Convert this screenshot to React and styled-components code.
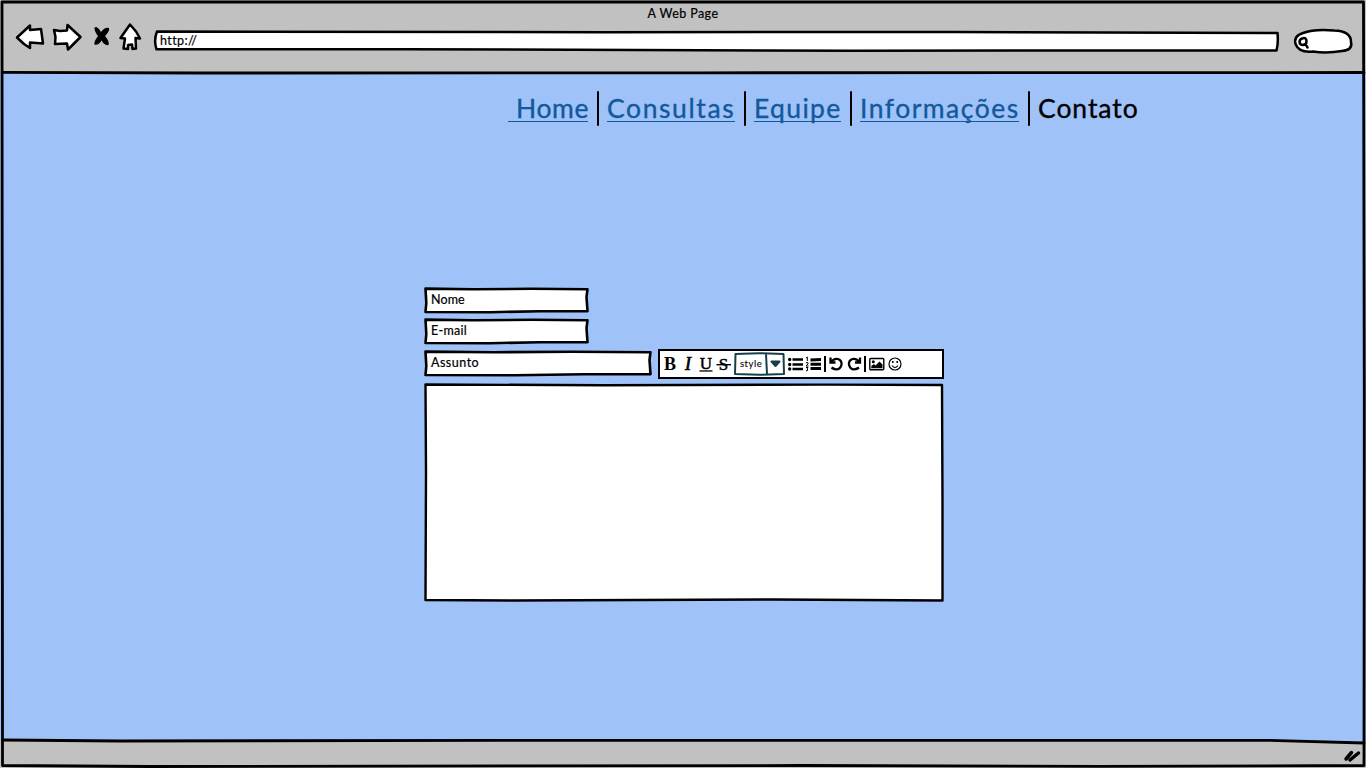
import React from "react";
import styled, { createGlobalStyle } from "styled-components";

const GlobalStyle = createGlobalStyle`
  * { box-sizing: border-box; }
  body { margin: 0; background: #fff; font-family: Lato, "Open Sans", sans-serif; color: #000; }
`;

const Window = styled.div`
  position: relative;
  width: 1366px;
  height: 768px;
  overflow: hidden;
  display: flex;
  flex-direction: column;
  background: #9fc3f8;
`;

const Outline = styled.svg`
  position: absolute;
  inset: 0;
  width: 100%;
  height: 100%;
  overflow: visible;
  pointer-events: none;
  fill: ${(p) => p.$fill || "none"};
  stroke: ${(p) => p.$stroke || "#000"};
  stroke-width: ${(p) => p.$weight || 2.5};
  stroke-linejoin: round;
  stroke-linecap: round;
`;

const Header = styled.header`
  height: 73px;
  background: #c1c1c1;
`;

const Title = styled.h1`
  margin: 0;
  padding-top: 5px;
  height: 22px;
  font-size: 12.5px;
  line-height: 17px;
  font-weight: 400;
  text-align: center;
  letter-spacing: 0.42px;
  -webkit-text-stroke: 0.2px;
`;

const Controls = styled.div`
  display: flex;
  padding-left: 14px;
`;

const NavIcon = styled.svg`
  flex: none;
  width: ${(p) => p.$width}px;
  height: 34px;
  fill: #fff;
  stroke: #000;
  stroke-width: 2.5;
  stroke-linejoin: round;
  stroke-linecap: round;
`;

const Address = styled.div`
  position: relative;
  width: 1125px;
  height: 22px;
  margin: 8px 15px 0 8px;
`;

const Search = styled.div`
  position: relative;
  width: 60px;
  height: 25px;
  margin-top: 7px;
`;

const BoxText = styled.span`
  position: relative;
  display: block;
  padding: ${(p) => p.$pad || "5px 0 0 7px"};
  font-size: ${(p) => p.$size || 12.5}px;
  line-height: 16px;
  letter-spacing: ${(p) => p.$spacing || 0}px;
  white-space: nowrap;
  -webkit-text-stroke: ${(p) => p.$bold || 0.2}px;
`;

const Page = styled.main`
  flex: 1;
`;

const Menu = styled.nav`
  display: flex;
  height: 53px;
  padding: 19px 0 0 508px;
`;

const MenuItem = styled.a`
  width: ${(p) => p.$width}px;
  height: 30px;
  margin-right: 9px;
  padding-left: ${(p) => p.$indent || 0}px;
  border-bottom: 1px solid ${(p) => (p.$current ? "transparent" : "#14589c")};
  color: ${(p) => (p.$current ? "#000" : "#14589c")};
  font-size: 26.5px;
  line-height: 32px;
  letter-spacing: ${(p) => p.$spacing}px;
  white-space: nowrap;
  -webkit-text-stroke: 0.35px;
`;

const Divider = styled.span`
  width: 2px;
  height: 35px;
  margin: -1px 8px 0 0;
  border-radius: 1px;
  background: #000;
`;

const Form = styled.form`
  display: flex;
  flex-direction: column;
  width: 520px;
  margin: 161px 0 0 424px;
`;

const Field = styled.div`
  position: relative;
  width: ${(p) => p.$width}px;
  height: ${(p) => p.$height || 27}px;
  margin-bottom: ${(p) => p.$gap || 0}px;
`;

const SubjectRow = styled.div`
  display: flex;
  justify-content: space-between;
  height: 34px;
`;

const Toolbar = styled.div`
  display: flex;
  align-items: center;
  width: 286px;
  height: 30px;
  padding-left: 1px;
  border: 2px solid #000;
  background: #fff;
`;

const Format = styled.span`
  flex: none;
  width: 18px;
  text-align: center;
  font: ${(p) => p.$font || "bold"} ${(p) => p.$size || 18}px/24px "Liberation Serif", serif;
  -webkit-text-stroke: ${(p) => p.$bold || 0}px;
`;

const LineMark = styled.svg`
  flex: none;
  width: 18px;
  height: 24px;
  overflow: visible;
  fill: #000;
  stroke: none;
  font: 17px "Liberation Serif", serif;
`;

const StylePicker = styled.div`
  position: relative;
  flex: none;
  width: 51px;
  height: 24px;
  margin: 0 2px 0 1px;
`;

const ToolIcon = styled.svg`
  flex: none;
  width: 18px;
  height: 18px;
  margin-left: ${(p) => p.$offset || 0}px;
  fill: none;
  stroke: #000;
  stroke-width: 2.3;
`;

const Rule = styled.span`
  flex: none;
  width: 2px;
  height: 16px;
  margin: 0 1px;
  background: #000;
`;

const Footer = styled.footer`
  display: flex;
  justify-content: flex-end;
  height: 27px;
  background: #c1c1c1;
`;

const Grip = styled.svg`
  width: 24px;
  height: 24px;
  stroke: #000;
  stroke-width: 3.5;
  stroke-linecap: round;
`;

function SketchField({ width, text, gap, spacing }) {
  const r = width - 1.5;
  return (
    <Field $width={width} $gap={gap}>
      <Outline $fill="#fff" $weight={2.6}>
        <path d={`M1.5 1.6 L${width * 0.3} 2.2 L${width * 0.65} 1.8 L${r} 2.2 L${r - 1} 10 L${r} 24.2 L${width * 0.7} 24.2 L${width * 0.4} 25.2 L1.5 25 L2.3 16 Z`} />
      </Outline>
      <BoxText $spacing={spacing}>{text}</BoxText>
    </Field>
  );
}

export default function App() {
  return (
    <Window>
      <GlobalStyle />
      <Header>
        <Title>A Web Page</Title>
        <Controls>
          <NavIcon $width={34} viewBox="14 22 34 34">
            <path d="M17 37.5 L30 25.5 V30 L41 29 L43 43.5 L30 42.5 V48 L24 44 Z" />
          </NavIcon>
          <NavIcon $width={42} viewBox="48 22 42 34">
            <path d="M54 30 L60 31 L67 30.5 L67.5 25 L80.5 37 L68 49.5 L67 43.5 L55 44 L55.5 37 Z" />
          </NavIcon>
          <NavIcon $width={24} viewBox="90 22 24 34">
            <path d="M94.5 27.5 Q97 25.5 101 32 Q105 26.5 109 28 Q110 31 105 36 Q110 42 108.5 45 Q105 46 101.5 40.5 Q98 46 94.5 44.5 Q93.5 42 98 36 Q94 31 94.5 27.5 Z" fill="#000" strokeWidth="0" />
          </NavIcon>
          <NavIcon $width={32} viewBox="114 22 32 34">
            <path d="M130 24.5 L120.5 38 L125 38.5 L123.5 48.5 L128 49 V45 L132 44.5 L132.5 49 L136 48.5 L135.5 38 L140 38.5 L136 31.5 Z" />
          </NavIcon>
          <Address>
            <Outline $fill="#fff">
              <path d="M3 1.5 L450 2.2 L800 2 L1123.5 3 Q1124.5 13 1122.5 20.5 L700 20.7 L250 19.2 L2.5 19.3 Q-0.5 10 3 1.5 Z" />
            </Outline>
            <BoxText $pad="3px 0 0 6px" $spacing={0.4}>http://</BoxText>
          </Address>
          <Search>
            <Outline $fill="#fff">
              <path d="M9 4 Q20 -0.2 40 1.5 Q57 2 57 13 Q59 21 48 22 Q33 24.5 19 22.5 Q5 24 1.5 15 Q-0.5 7 9 4 Z" />
              <path d="M9 9.2 Q12.5 8.5 12.5 12.5 Q12.5 15.8 9 16 Q5.5 16 5.5 12.5 Q6 9.5 9 9.2 M10 15.5 Q12 15 13.5 18.5" />
            </Outline>
          </Search>
        </Controls>
      </Header>

      <Page>
        <Menu>
          <MenuItem $width={80} $indent={8} $spacing={0.6}>Home</MenuItem>
          <Divider />
          <MenuItem $width={128} $spacing={1.6}>Consultas</MenuItem>
          <Divider />
          <MenuItem $width={87} $spacing={1.35}>Equipe</MenuItem>
          <Divider />
          <MenuItem $width={159} $spacing={1.5}>Informações</MenuItem>
          <Divider />
          <MenuItem $width={100} $spacing={0.95} $current>Contato</MenuItem>
        </Menu>

        <Form>
          <SketchField width={165} text="Nome" gap={4} spacing={0.1} />
          <SketchField width={165} text="E-mail" gap={4} spacing={0.3} />
          <SubjectRow>
            <Field $width={228}>
              <Outline $fill="#fff" $weight={2.6}>
                <path d="M1.5 2.6 L70 3.2 L148 2.8 L226.5 3.2 L225.5 11 L226.5 25.2 L160 25.2 L91 26.2 L1.5 26 L2.3 17 Z" />
              </Outline>
              <BoxText $pad="6px 0 0 7px" $spacing={0.5}>Assunto</BoxText>
            </Field>
            <Toolbar>
              <Format>B</Format>
              <Format $font="italic" $size={18} $bold={0.7}>I</Format>
              <LineMark viewBox="0 0 18 24">
                <text x="9" y="16.5" textAnchor="middle" stroke="#000" strokeWidth="0.5">U</text>
                <rect x="2.5" y="18.3" width="13" height="1.3" />
              </LineMark>
              <LineMark viewBox="0 0 18 24">
                <text x="8.5" y="18" textAnchor="middle" stroke="#000" strokeWidth="0.5">S</text>
                <rect x="1.5" y="12" width="14.5" height="1.4" />
              </LineMark>
              <StylePicker>
                <Outline $fill="#fff" $stroke="#173f4b" $weight={2}>
                  <path d="M1.5 2 L25 1.2 L49.5 2 L50 22 L25 22.8 L1 22 Z M32 2 L33 22" />
                  <path d="M37.5 9.5 H45.5 L41.5 14 Z" fill="#173f4b" />
                </Outline>
                <BoxText $pad="4px 0 0 6px" $size={9.5} $spacing={0.5} $bold={0.1}>style</BoxText>
              </StylePicker>
              <ToolIcon viewBox="0 0 18 18">
                <path d="M5.5 4.5 H16 M5.5 9.5 H16 M5.5 14 H16" />
                <path d="M2.7 4.5 H2.71 M2.7 9.5 H2.71 M2.7 14 H2.71" strokeWidth="3.4" strokeLinecap="round" />
              </ToolIcon>
              <ToolIcon viewBox="0 0 18 18">
                <path d="M5.5 5 L16 4.5 M5.5 9.2 H16 M5.5 13.5 H16" strokeWidth="2.9" />
                <path d="M1 3 L2.3 2 V6 M1 7.7 H3 V9 L1 11 H3.5 M1 12.5 H3 L2 14 L3 15 L1 16" strokeWidth="1" />
              </ToolIcon>
              <Rule />
              <ToolIcon viewBox="0 0 18 18">
                <path d="M3.5 2.5 V7.5 H8.5 M4 7 Q7 3 11 4 Q15 5.5 14.5 9.5 Q13.5 14.5 9 14.3 Q6.5 14.2 4.5 12.5" />
              </ToolIcon>
              <ToolIcon viewBox="0 0 18 18">
                <path d="M15 2.5 V7.5 H10 M14.5 7 Q11.5 3 7.5 4 Q3.5 5.5 4 9.5 Q5 14.5 9.5 14.3 Q12 14.2 14 12.5" />
              </ToolIcon>
              <Rule style={undefined} />
              <ToolIcon $offset={1} viewBox="0 0 18 18">
                <rect x="1.8" y="3.5" width="14" height="11.2" rx="1" strokeWidth="1.4" />
                <path d="M3.3 13.3 V11 L6 9 L7.5 10.5 L11.5 6.5 L14.5 9.5 V13.3 Z" fill="#000" stroke="none" />
                <circle cx="5.3" cy="6.8" r="1.5" fill="#000" stroke="none" />
              </ToolIcon>
              <ToolIcon viewBox="0 0 18 18">
                <circle cx="9" cy="9" r="6" strokeWidth="1.2" />
                <path d="M6 10.5 Q9 14.5 12 10.5" strokeWidth="1.1" />
                <path d="M6.8 6 V8 M11.2 6 V8" strokeWidth="1.5" />
              </ToolIcon>
            </Toolbar>
          </SubjectRow>
          <Field $width={520} $height={219}>
            <Outline $fill="#fff" $weight={2.4}>
              <path d="M1.5 1.5 L180 2.2 L400 1.6 L518 2 L518.5 120 L518.5 217.5 L350 216.5 L90 217.5 L1.5 217 L2 90 Z" />
            </Outline>
          </Field>
        </Form>
      </Page>

      <Footer>
        <Grip viewBox="0 0 24 24">
          <path d="M4 18 L9.5 11.5 M8 19 L16.5 12" />
        </Grip>
      </Footer>
      <Outline $weight={2.8}>
        <path d="M2 2 L700 2 L1363.5 2 L1364.3 400 L1364 765.5 L1100 766.3 L800 765.5 L150 766.5 L2.5 765.5 L2.3 400 Z" />
        <path d="M3 72.3 L200 73 L700 72.8 L1364 72.5 M3 740 L120 741 L500 740.3 L1270 740.3 L1364 743" />
      </Outline>
    </Window>
  );
}
